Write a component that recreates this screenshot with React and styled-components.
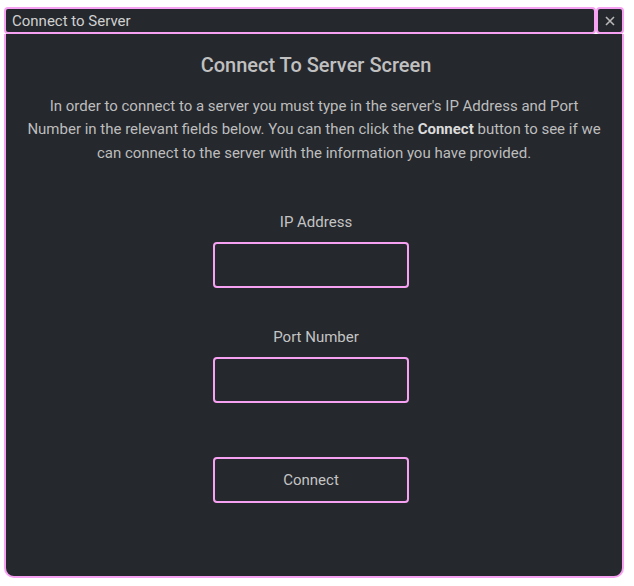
import React from 'react'
import styled, { createGlobalStyle } from 'styled-components'

const Global = createGlobalStyle`
  body {
    margin: 0;
    background: #ffffff;
    font-family: Roboto, "Liberation Sans", sans-serif;
  }
`

const pink = '#f7a1f2'
const panel = '#25282d'

export default function App() {
  return (
    <>
      <Global />
      <Frame>
        <TitleRow>
          <TitleBar>Connect to Server</TitleBar>
          <CloseButton aria-label="close">
            <svg width="10" height="10" viewBox="0 0 10 10">
              <path d="M1 1 L9 9 M9 1 L1 9" stroke="#b8b8b8" strokeWidth="1.6" />
            </svg>
          </CloseButton>
        </TitleRow>
        <Body>
          <Heading>Connect To Server Screen</Heading>
          <Intro>
            In order to connect to a server you must type in the server's IP Address and Port
            Number in the relevant fields below. You can then click the <b>Connect</b> button to
            see if we can connect to the server with the information you have provided.
          </Intro>
          <Field>
            <Label>IP Address</Label>
            <Input />
          </Field>
          <Field>
            <Label>Port Number</Label>
            <Input />
          </Field>
          <Button>Connect</Button>
        </Body>
      </Frame>
    </>
  )
}

const Frame = styled.div`
  width: 620px;
  margin: 7px 0 0 4px;
  display: flex;
  flex-direction: column;
`

const TitleRow = styled.div`
  display: flex;
  height: 27px;
`

const TitleBar = styled.div`
  flex: 1;
  box-sizing: border-box;
  background: ${panel};
  border: 2px solid ${pink};
  border-radius: 4px;
  color: #d0d0d0;
  font-size: 15px;
  line-height: 24px;
  padding-left: 6px;
`

const CloseButton = styled.div`
  width: 28px;
  box-sizing: border-box;
  background: ${panel};
  border: 2px solid ${pink};
  border-radius: 4px;
  display: flex;
  align-items: center;
  justify-content: center;
`

const Body = styled.div`
  height: 544px;
  box-sizing: border-box;
  background: ${panel};
  border: 2px solid ${pink};
  border-top: none;
  border-radius: 0 0 10px 10px;
  display: flex;
  flex-direction: column;
  align-items: center;
  color: #c4c4c4;
`

const Heading = styled.h1`
  margin: 19px 0 0 4px;
  font-size: 20px;
  font-weight: 500;
  line-height: 24px;
  color: #c0c0c0;
`

const Intro = styled.p`
  margin: 18px 0 0;
  width: 584px;
  text-align: center;
  font-size: 15px;
  line-height: 23.3px;
  color: #bdbdbd;

  b {
    color: #dcdcdc;
    font-weight: 700;
  }
`

const Field = styled.div`
  display: flex;
  flex-direction: column;
  align-items: center;
  margin-top: 48px;

  & + & {
    margin-top: 40px;
  }
`

const Label = styled.div`
  font-size: 15px;
  line-height: 18px;
  color: #c4c4c4;
  margin: 0 0 11px 4px;
`

const Input = styled.div`
  width: 196px;
  height: 46px;
  box-sizing: border-box;
  border: 2px solid ${pink};
  border-radius: 4px;
  margin-right: 6px;
`

const Button = styled.div`
  width: 196px;
  height: 46px;
  box-sizing: border-box;
  border: 2px solid ${pink};
  border-radius: 4px;
  margin: 54px 6px 0 0;
  display: flex;
  align-items: center;
  justify-content: center;
  font-size: 15px;
  color: #c4c4c4;
`
